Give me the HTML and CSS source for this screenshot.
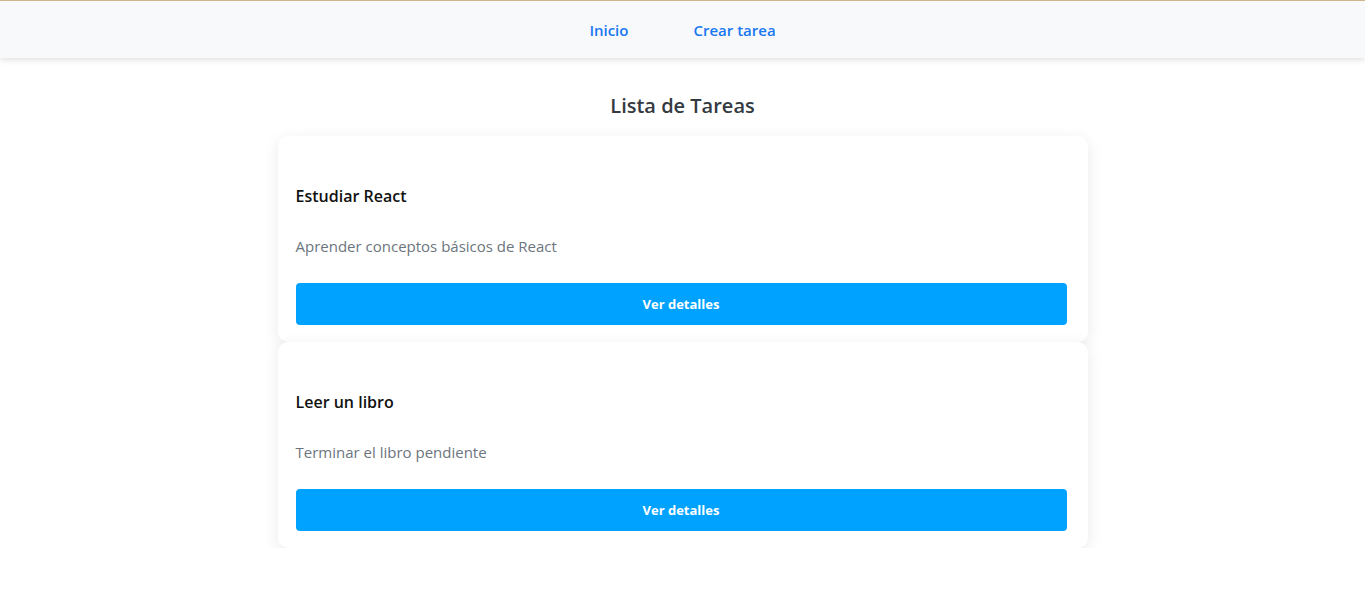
FILE: index.html
```html
<!DOCTYPE html>
<html lang="es">
<head>
<meta charset="utf-8">
<title>Lista de Tareas</title>
<link rel="stylesheet" href="styles.css">
</head>
<body>
<nav class="navbar">
  <a class="nav-link" href="#">Inicio</a>
  <a class="nav-link" href="#">Crear tarea</a>
</nav>
<main class="container">
  <h2 class="page-title">Lista de Tareas</h2>
  <div class="task-list">
    <div class="card">
      <h3 class="card-title">Estudiar React</h3>
      <p class="card-text">Aprender conceptos básicos de React</p>
      <button class="btn">Ver detalles</button>
    </div>
    <div class="card">
      <h3 class="card-title">Leer un libro</h3>
      <p class="card-text">Terminar el libro pendiente</p>
      <button class="btn">Ver detalles</button>
    </div>
  </div>
</main>
</body>
</html>
```
FILE: styles.css
```css
html, body {
  margin: 0;
  padding: 0;
  background: #ffffff;
  font-family: "Open Sans", "Noto Sans", "Liberation Sans", sans-serif;
}
.navbar {
  height: 57px;
  border-top: 1px solid #d1b38c;
  background: #f8f9fa;
  box-shadow: 0 2px 6px rgba(0, 0, 0, 0.12);
  display: flex;
  justify-content: center;
  align-items: center;
  gap: 65px;
}
.nav-link {
  color: #1877f2;
  text-decoration: none;
  font-size: 15px;
  font-weight: 600;
}
.container {
  display: flex;
  flex-direction: column;
  align-items: center;
}
.page-title {
  margin: 34px 0 16px;
  font-size: 20px;
  line-height: 28px;
  font-weight: 600;
  color: #343a40;
}
.task-list {
  width: 810px;
  display: flex;
  flex-direction: column;
  gap: 0;
}
.card {
  background: #fff;
  border-radius: 10px;
  box-shadow: 0 4px 16px rgba(0, 0, 0, 0.09);
  padding: 49px 21px 17px 18px;
  display: flex;
  flex-direction: column;
}
.card-title {
  margin: 0;
  font-size: 16px;
  line-height: 22px;
  font-weight: 600;
  color: #111;
}
.card-text {
  margin: 29px 0 27px;
  font-size: 15px;
  line-height: 20px;
  color: #6c757d;
}
.btn {
  height: 42px;
  border: none;
  border-radius: 4px;
  background: #00a2ff;
  color: #fff;
  font-family: inherit;
  font-size: 13px;
  font-weight: 700;
  cursor: pointer;
}
```
